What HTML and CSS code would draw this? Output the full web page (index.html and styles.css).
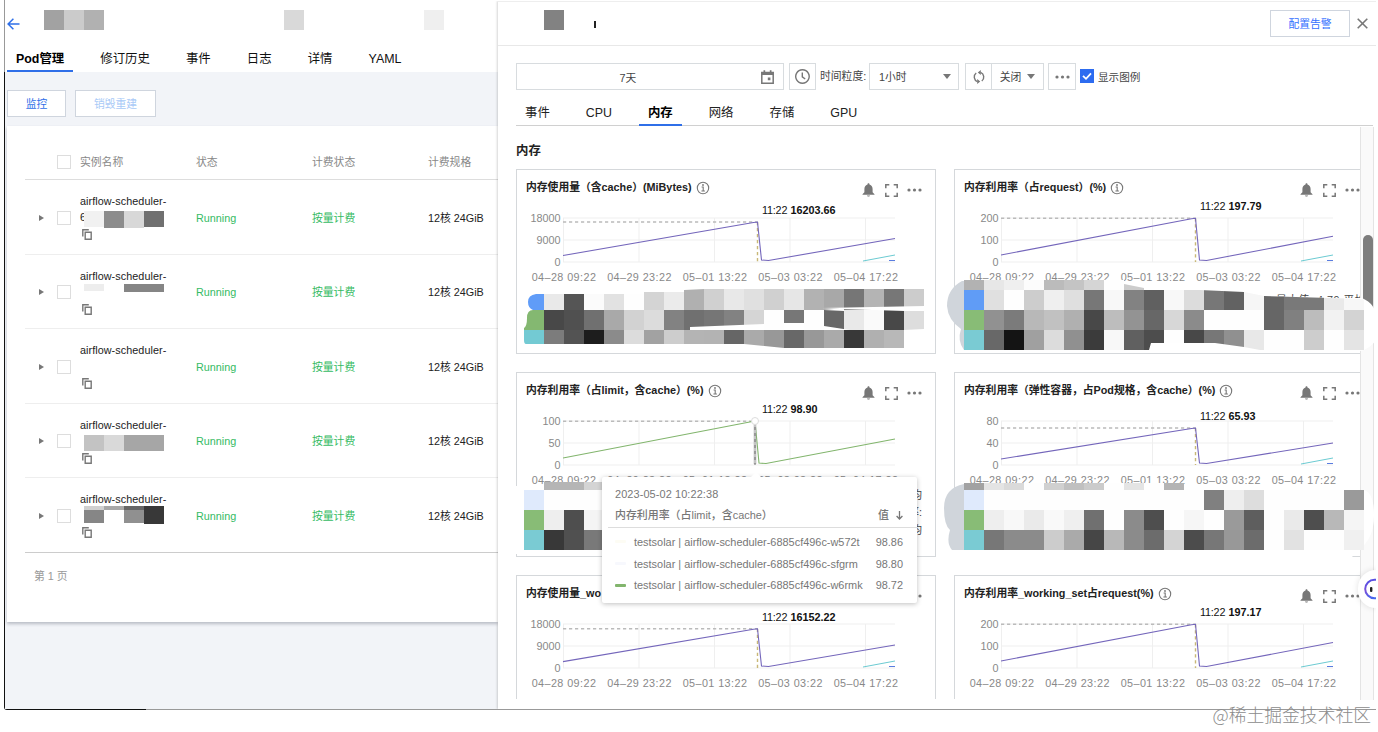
FILE: index.html
```html
<!DOCTYPE html>
<html lang="zh-CN">

<head>
    <meta charset="UTF-8">
    <title>Pod管理</title>
    <link rel="stylesheet" href="styles.css">
</head>

<body>
    <!-- 图标 -->
    <svg class="defs">
        <symbol id="i-copy" viewBox="0 0 10 11">
            <path d="M0.8 7.5V0.8H6.8M3.2 3.2H9.2V10.2H3.2Z" fill="none" stroke="#777" stroke-width="1.4" />
        </symbol>
        <symbol id="i-info" viewBox="0 0 14 14">
            <circle cx="7" cy="7" r="5.7" fill="none" stroke="#777" stroke-width="1.1" />
            <path d="M5.6 6H7.2V9.8M5.4 10H8.9" fill="none" stroke="#777" stroke-width="1.1" />
            <circle cx="7" cy="4" r="0.9" fill="#777" />
        </symbol>
        <symbol id="i-bell" viewBox="0 0 13 14">
            <path d="M6.5 0.3C7.2 0.3 7.5 0.8 7.5 1.4C9.6 2 10.6 3.7 10.6 6V9.2L12.5 11.2V11.8H0.5V11.2L2.4 9.2V6C2.4 3.7 3.4 2 5.5 1.4C5.5 0.8 5.8 0.3 6.5 0.3ZM5 12.4H8C8 13.8 5 13.8 5 12.4Z" fill="#777" />
        </symbol>
        <symbol id="i-full" viewBox="0 0 13 13">
            <path d="M0.8 4.3V0.8H4.3M8.7 0.8H12.2V4.3M12.2 8.7V12.2H8.7M4.3 12.2H0.8V8.7" fill="none" stroke="#777" stroke-width="1.5" />
        </symbol>
        <symbol id="i-more" viewBox="0 0 15 4">
            <circle cx="2" cy="2" r="1.6" fill="#777" />
            <circle cx="7.5" cy="2" r="1.6" fill="#777" />
            <circle cx="13" cy="2" r="1.6" fill="#777" />
        </symbol>
    </svg>

    <div class="window">
        <div class="page">
            <div class="page-head">
                <svg class="back" viewBox="0 0 13 12">
                    <path d="M12.5 6H1.2M6.4 0.7L1.1 6L6.4 11.3" fill="none" stroke="#2f6fe8" stroke-width="1.5" />
                </svg>
                <div class="mask m1"><i></i><i></i><i></i></div>
                <div class="mask m2"><i></i></div>
                <div class="mask m3"><i></i></div>
            </div>
            <ul class="page-tabs">
                <li class="on">Pod管理</li>
                <li>修订历史</li>
                <li>事件</li>
                <li>日志</li>
                <li>详情</li>
                <li>YAML</li>
            </ul>
            <div class="actions">
                <button class="btn">监控</button>
                <button class="btn disabled">销毁重建</button>
            </div>
            <div class="panel">
                <div class="row head">
                    <span></span><span><i class="check"></i></span>
                    <span>实例名称</span><span>状态</span><span>计费状态</span><span>计费规格</span>
                </div>
                <div id="pods"></div>
                <div class="pager">第 1 页</div>
            </div>
        </div>

        <div class="drawer">
            <div class="drawer-head">
                <i class="title-mask"></i>
                <i class="tick"></i>
                <button class="btn alarm">配置告警</button>
                <svg class="close" viewBox="0 0 11 11">
                    <path d="M0.7 0.7L10.3 10.3M10.3 0.7L0.7 10.3" stroke="#777" stroke-width="1.6" />
                </svg>
            </div>
            <div class="toolbar">
                <div class="box date">
                    <span>7天</span>
                    <svg width="13" height="14" viewBox="0 0 13 14">
                        <path d="M0.8 2.6H12.2V13.2H0.8Z" fill="none" stroke="#777" stroke-width="1.5" />
                        <path d="M0.5 2H12.5V5H0.5ZM2.5 0.3H4.2V3H2.5ZM8.8 0.3H10.5V3H8.8ZM6.8 7.6H9.4V10.2H6.8Z" fill="#777" />
                    </svg>
                </div>
                <div class="box clock">
                    <svg width="15" height="15" viewBox="0 0 15 15">
                        <path d="M7.5 0.8A6.7 6.7 0 1 1 7.4 0.8ZM7.3 3.4V7.8L10.2 10" fill="none" stroke="#777" stroke-width="1.4" />
                    </svg>
                </div>
                <span class="label">时间粒度:</span>
                <div class="box grain">1小时<i class="caret"></i></div>
                <div class="box refresh">
                    <svg width="14" height="14" viewBox="0 0 14 14">
                        <path d="M8.6 2.4A5 5 0 0 1 9.8 11M5.4 11.6A5 5 0 0 1 4.2 3" fill="none" stroke="#777" stroke-width="1.4" />
                        <path d="M8.8 0L5.8 2.6L8.8 5ZM5.2 14L8.2 11.4L5.2 9Z" fill="#777" />
                    </svg>
                </div>
                <div class="box off">关闭<i class="caret"></i></div>
                <div class="box more"><svg width="15" height="4"><use href="#i-more" /></svg></div>
                <i class="checked"><svg width="14" height="14" viewBox="0 0 14 14">
                        <path d="M3 6.8L6 9.8L11 4.4" fill="none" stroke="#fff" stroke-width="1.8" />
                    </svg></i>
                <span class="legend-label">显示图例</span>
            </div>
            <ul class="tabs">
                <li>事件</li>
                <li>CPU</li>
                <li class="on">内存</li>
                <li>网络</li>
                <li>存储</li>
                <li>GPU</li>
            </ul>
            <div class="scroll">
                <div class="content">
                    <h3>内存</h3>
                    <div class="cards" id="cards"></div>
                </div>
                <div class="track"><div class="thumb"></div></div>
            </div>

            <svg class="mosaic" id="mosaic" width="880" height="708" viewBox="498 1 880 708"></svg>

            <div class="tip">
                <div class="tip-time">2023-05-02 10:22:38</div>
                <div class="tip-head"><span>内存利用率（占limit，含cache）</span><span>值
                        <svg width="7" height="9" viewBox="0 0 7 9"><path d="M3.5 0V8M0.6 5L3.5 8L6.4 5" fill="none" stroke="#777" stroke-width="1.3" /></svg></span>
                </div>
                <div class="tip-row"><i class="c1"></i><span>testsolar | airflow-scheduler-6885cf496c-w572t</span><b>98.86</b></div>
                <div class="tip-row"><i class="c2"></i><span>testsolar | airflow-scheduler-6885cf496c-sfgrm</span><b>98.80</b></div>
                <div class="tip-row"><i class="c3"></i><span>testsolar | airflow-scheduler-6885cf496c-w6rmk</span><b>98.72</b></div>
            </div>
            <div class="helper">
                <svg width="20" height="38" viewBox="0 0 20 38">
                    <defs>
                        <linearGradient id="ring" x1="0" y1="0" x2="0.4" y2="1">
                            <stop offset="0" stop-color="#4a4fe8" />
                            <stop offset="0.5" stop-color="#7a50d8" />
                            <stop offset="1" stop-color="#4668f0" />
                        </linearGradient>
                    </defs>
                    <circle cx="16.5" cy="19" r="9.3" fill="#fff" stroke="url(#ring)" stroke-width="2" />
                    <rect x="12" y="17" width="2.4" height="5" rx="1" fill="#222" />
                </svg>
            </div>
        </div>
    </div>
    <div class="watermark">@稀土掘金技术社区</div>
    <script src="script.js"></script>
</body>

</html>
```
FILE: styles.css
```css
body,
h3,
ul,
button {
    margin: 0;
    padding: 0;
}

body {
    position: relative;
    width: 1378px;
    height: 732px;
    overflow: hidden;
    background: #fff;
    font: 10.8px/16px "Liberation Sans", "Noto Sans CJK SC", sans-serif;
    color: #222;
}

ul {
    list-style: none;
}

button {
    font: inherit;
}

* {
    box-sizing: border-box;
}

svg {
    display: block;
    flex: none;
}

.defs {
    position: absolute;
    width: 0;
    height: 0;
}

.window {
    display: flex;
    width: 1372px;
    height: 710px;
    margin-left: 4px;
    padding: 1px 0 1px 1px;
    border-bottom-left-radius: 3px;
    background:
        linear-gradient(#111, #111) 0 100% / 142px 1px no-repeat,
        linear-gradient(#999, #999) 0 100% / 100% 1px no-repeat,
        linear-gradient(#999 72px, #111 72px) 0 0 / 1px 100% no-repeat;
}

/* 左侧页面 */
.page {
    width: 493px;
    height: 708px;
    flex: none;
    background: #f2f4f8;
    overflow: hidden;
}

.page-head {
    display: flex;
    height: 44px;
    padding: 9px 0 0 2px;
    background: #fff;
}

.back {
    width: 13px;
    height: 12px;
    margin-top: 8px;
}

.mask {
    display: flex;
    height: 20px;
}

.mask i {
    width: 20px;
    background: #a2a2a2;
}

.m1 {
    margin-left: 24px;
}

.m1 i:nth-child(2) {
    background: #cbcbcb;
}

.m1 i:nth-child(3) {
    background: #b1b1b1;
}

.m2 {
    margin-left: 180px;
}

.m2 i {
    background: #d9d9d9;
}

.m3 {
    margin-left: 120px;
}

.m3 i {
    background: #efefef;
}

.page-tabs {
    display: flex;
    gap: 18.1px;
    height: 27px;
    padding-left: 2px;
    background: #fff;
    font-size: 12.4px;
    line-height: 29px;
    color: #111;
}

.page-tabs li {
    height: 27px;
    padding: 0 9px;
}

.page-tabs .on {
    border-bottom: 2px solid #2f6fe8;
    font-weight: bold;
    color: #000;
}

.actions {
    display: flex;
    gap: 9px;
    padding: 18px 0 9px 2px;
}

.btn {
    width: 59px;
    height: 27px;
    border: 1px solid #cfd5de;
    background: #fff;
    color: #2f6fe8;
}

.btn.disabled {
    width: 81px;
    color: #a9caf7;
}

.panel {
    height: 496px;
    margin-left: 2px;
    padding: 17px 0 0 18px;
    background: #fff;
    box-shadow: 0 2px 3px rgba(54, 58, 80, .3);
}

.row {
    display: grid;
    grid-template-columns: 32px 23px 116px 116px 116px 1fr;
    align-items: center;
    height: 74.5px;
    padding-top: 2px;
    border-bottom: 1px solid #eee;
}

.row.head {
    height: 37px;
    border-bottom-color: #ddd;
    color: #888;
}

.row.pod:last-child {
    border-bottom-color: #ccc;
}

.check {
    display: block;
    width: 14px;
    height: 14px;
    border: 1px solid #ddd;
}

.arrow {
    width: 0;
    margin-left: 14px;
    border: 3px solid transparent;
    border-left: 5px solid #777;
    border-right: 0;
}

.name {
    padding-bottom: 1px;
}

.name p {
    margin: 0;
    height: 15px;
    line-height: 15px;
    letter-spacing: .06px;
}

.name .rest {
    display: flex;
    height: 17px;
    line-height: 17px;
}

.name .rest span {
    width: 0;
}

.name .copy {
    width: 10px;
    height: 11px;
    margin: 3px 0 0 2px;
}

.name .rest svg {
    overflow: visible;
}

.green {
    color: #35bb63;
}

.pager {
    padding: 15px 0 0 9px;
    color: #999;
}

/* 监控抽屉 */
.drawer {
    position: relative;
    width: 878px;
    height: 708px;
    flex: none;
    background: #fff;
    border-top: 1px solid #eee;
    box-shadow: -1px 0 2px rgba(0, 0, 0, .16);
    clip-path: inset(0 0 0 -4px);
}

.drawer-head {
    display: flex;
    height: 44px;
    padding: 8px 8px 0 46px;
    border-bottom: 1px solid #e8e8e8;
}

.title-mask {
    width: 20px;
    height: 20px;
    background: #828282;
}

.tick {
    width: 2px;
    height: 7px;
    margin: 11px 0 0 30px;
    background: #222;
}

.btn.alarm {
    width: 80px;
    margin-left: auto;
    color: #3370ff;
}

.close {
    width: 11px;
    height: 11px;
    margin: 8px 0 0 7px;
}

.toolbar {
    display: flex;
    height: 52px;
    padding: 17px 0 0 18px;
    color: #444;
}

.box {
    display: flex;
    align-items: center;
    justify-content: center;
    height: 27px;
    border: 1px solid #d8dcdf;
}

.date {
    width: 268px;
    padding-right: 9px;
}

.date span {
    flex: 1;
    padding: 2px 22px 0 0;
    text-align: center;
}

.clock {
    width: 27px;
    margin-left: 5px;
}

.label {
    width: 49px;
    margin: 5px 0 0 4px;
    white-space: nowrap;
}

.grain {
    justify-content: space-between;
    width: 90px;
    padding: 0 7px 0 9px;
}

.caret {
    border: 4px solid transparent;
    border-top: 5px solid #777;
    border-bottom: 0;
}

.refresh {
    width: 27px;
    margin-left: 6px;
}

.off {
    gap: 6px;
    width: 52px;
    border-left: 0;
}

.more {
    width: 28px;
    margin-left: 4px;
}

.checked {
    width: 14px;
    height: 14px;
    margin: 6px 0 0 4px;
    background: #2d6cf0;
}

.legend-label {
    margin: 6px 0 0 4px;
    font-size: 10.6px;
}

.tabs {
    display: flex;
    gap: 18px;
    height: 28px;
    margin: 0 3px 0 18px;
    border-bottom: 1px solid #d0d0d0;
    font-size: 12.4px;
    line-height: 31px;
    color: #222;
}

.tabs li {
    height: 28px;
    padding: 0 9px;
}

.tabs .on {
    border-bottom: 2px solid #2f6fe8;
    font-weight: bold;
    color: #000;
}

.scroll {
    display: flex;
    height: 573px;
    padding-top: 1px;
}

.content {
    width: 862px;
    padding: 15px 0 0 18px;
    overflow: hidden;
}

.content h3 {
    height: 27px;
    font-size: 12.4px;
    line-height: 18px;
}

.cards {
    display: grid;
    grid-template-columns: 420px 421px;
    grid-auto-rows: 184.8px;
    gap: 18px;
}

.card {
    padding: 9px 13px 0 9px;
    border: 1px solid #d5d8db;
}

.card:nth-child(even) {
    padding-right: 14px;
}

.card-head {
    display: flex;
    height: 18px;
    font-weight: bold;
    line-height: 17px;
    color: #222;
    white-space: nowrap;
}

.card-head .info {
    width: 14px;
    height: 14px;
    margin: 2px 0 0 4px;
}

.card-head .bell {
    width: 13px;
    height: 14px;
    margin: 4px 0 0 auto;
}

.card-head .full {
    width: 13px;
    height: 13px;
    margin: 5px 0 0 10px;
}

.card-head .dots {
    width: 15px;
    height: 4px;
    margin: 9px 0 0 9px;
}

.chart {
    margin: -28px 0 0 -10px;
    overflow: visible;
}

.chart text {
    font-size: 10.8px;
    fill: #888;
}

.chart .date-label {
    letter-spacing: .42px;
}

.chart .mark {
    fill: #111;
    letter-spacing: -.2px;
}

.chart .strong {
    font-weight: bold;
    letter-spacing: 0;
}

.chart .grid {
    stroke: #efefef;
}

.chart .dash {
    stroke: #bbb;
    stroke-width: 1.4;
    stroke-dasharray: 3.2 2.8;
}

.rest-legend {
    margin: -1px 0 0;
    text-align: right;
    line-height: 17.5px;
    color: #444;
}

.rest-legend.single {
    margin: 7px -6px 0 0;
    letter-spacing: .5px;
}

.track {
    width: 14px;
    height: 573px;
    padding: 108px 0 0 2px;
    border: 1px solid #e4e4e4;
    border-width: 0 1px;
    background: #fafafa;
}

.thumb {
    width: 10px;
    height: 78px;
    border-radius: 5px;
    background: #7d7d7d;
}

.mosaic {
    position: absolute;
    left: 0;
    top: -1px;
}

/* 图表提示框 */
.tip {
    position: absolute;
    left: 104px;
    top: 475px;
    width: 315px;
    height: 126px;
    padding: 9px 0 0;
    border-radius: 2px;
    background: #fff;
    box-shadow: 0 1px 5px rgba(0, 0, 0, .25);
    font-size: 10.93px;
    color: #777;
}

.tip::before {
    content: "";
    position: absolute;
    left: 148px;
    top: -5px;
    border: 6px solid transparent;
    border-top: 0;
    border-bottom-color: #fff;
}

.tip-time {
    padding-left: 13px;
    letter-spacing: .1px;
}

.tip-head {
    display: flex;
    justify-content: space-between;
    height: 26px;
    margin: 0 0 3px 6px;
    padding: 5px 14px 0 7px;
    border-bottom: 1px solid #ddd;
    font-weight: 500;
}

.tip-head span:last-child {
    display: flex;
    align-items: center;
    gap: 7px;
    height: 16px;
}

.tip-row {
    display: flex;
    align-items: center;
    height: 21.8px;
    padding: 0 14px 0 13px;
    white-space: nowrap;
}

.tip-row i {
    width: 11px;
    height: 3px;
    margin-right: 8px;
    border-radius: 1px;
}

.tip-row b {
    margin-left: auto;
    font-weight: normal;
}

.c1 {
    background: #fdfcf4;
}

.c2 {
    background: #f7f8fd;
}

.c3 {
    background: #82b56d;
}

.helper {
    position: absolute;
    right: 0;
    top: 568px;
    width: 18px;
    height: 38px;
    border-radius: 19px 0 0 19px;
    background: #fff;
    box-shadow: 0 0 6px rgba(0, 0, 0, .12);
    overflow: hidden;
}

.watermark {
    position: absolute;
    right: 7px;
    top: 701px;
    font: 300 17.8px/26px "Noto Sans CJK SC", sans-serif;
    color: #8c8c8c;
    white-space: nowrap;
}
```
FILE: script.js
```js
// Pod 列表，cells: [x, y, w, h, 颜色]
var pods = [
    { text: "6", cells: [[4, 2, 20, 16, "#f1f1f1"], [24, 2, 20, 17, "#8c8c8c"], [44, 2, 20, 17, "#d8d8d8"], [64, 2, 20, 16, "#707070"]] },
    { text: "", cells: [[4, 0, 20, 7, "#ededed"], [44, 0, 40, 8, "#858585"]] },
    { text: "", cells: [] },
    { text: "", cells: [[4, 2, 20, 16, "#c3c3c3"], [24, 2, 20, 16, "#d9d9d9"], [44, 2, 40, 16, "#a6a6a6"]] },
    { text: "", cells: [[4, -1, 20, 4, "#d0d0d0"], [24, -1, 20, 4, "#a8a8a8"], [44, -1, 20, 4, "#666"], [4, 3, 20, 13, "#868686"], [44, 3, 20, 13, "#909090"], [64, -1, 20, 18, "#383838"]] }
];

function rects(cells) {
    var html = "";
    for (var i = 0; i < cells.length; i++) {
        var c = cells[i];
        html += '<rect x="' + c[0] + '" y="' + c[1] + '" width="' + c[2] + '" height="' + c[3] + '" fill="' + c[4] + '"/>';
    }
    return html;
}

var podHtml = "";
for (var i = 0; i < pods.length; i++) {
    podHtml += '<div class="row pod"><i class="arrow"></i><i class="check"></i>' +
        '<div class="name"><p>airflow-scheduler-</p><div class="rest">' + (pods[i].text ? '<span>' + pods[i].text + '</span>' : '') +
        '<svg width="84" height="17">' + rects(pods[i].cells) + '</svg></div>' +
        '<svg class="copy"><use href="#i-copy"/></svg></div>' +
        '<span class="green">Running</span><span class="green">按量计费</span><span>12核 24GiB</span></div>';
}
document.getElementById("pods").innerHTML = podHtml;

// 图表卡片，纵坐标相对卡片顶部
var charts = [
    { title: "内存使用量（含cache）(MiBytes)", y: ["18000", "9000", "0"], start: 86.5, peak: 53, end: 69.5, mark: "16203.66", markY: 45 },
    { title: "内存利用率（占request）(%)", y: ["200", "100", "0"], start: 86, peak: 49.3, end: 67.3, mark: "197.79", markY: 41, legend: ["最大值: 4.79 平均"] },
    { title: "内存利用率（占limit，含cache）(%)", y: ["100", "50", "0"], start: 86, peak: 49.3, end: 67, mark: "98.90", markY: 41, hover: true, legend: ["平均", "率:", "平均"] },
    { title: "内存利用率（弹性容器，占Pod规格，含cache）(%)", y: ["80", "40", "0"], start: 87, peak: 56, end: 71, mark: "65.93", markY: 48 },
    { title: "内存使用量_wo", y: ["18000", "9000", "0"], start: 86.6, peak: 53.8, end: 70, mark: "16152.22", markY: 45.5 },
    { title: "内存利用率_working_set占request(%)", y: ["200", "100", "0"], start: 86, peak: 49.3, end: 67.5, mark: "197.17", markY: 41 }
];
var dates = ["04–28 09:22", "04–29 23:22", "05–01 13:22", "05–03 03:22", "05–04 17:22"];

function drawChart(c) {
    var left = 47, right = 379, top = 49, bottom = 93;
    var px = c.hover ? 239 : 241.5;
    var s = '<svg class="chart" width="420" height="116">';
    for (var i = 0; i < 3; i++) {
        var y = top + i * 22;
        s += '<path class="grid" d="M' + left + ' ' + y + 'H' + right + '"/>';
        s += '<text x="44.5" y="' + (y + 4) + '" text-anchor="end">' + c.y[i] + '</text>';
    }
    for (i = 0; i < 5; i++) {
        var x = left + 0.5 + i * 75.5;
        s += '<path class="grid" d="M' + x + ' ' + top + 'V' + bottom + '"/>';
        s += '<text class="date-label" x="' + (x + 0.5) + '" y="111.5" text-anchor="middle">' + dates[i] + '</text>';
    }
    s += '<path class="dash" d="M' + left + ' ' + c.peak + 'H' + px + '"/>';
    s += '<path class="dash" style="stroke:' + (c.hover ? "#999" : "#c9b877") + '" d="M' + px + ' ' + c.peak + 'V' + bottom + '"/>';
    s += '<path d="M' + left + ' ' + c.start + 'L' + (px - 4) + ' ' + (c.peak + 0.5) + 'L' + px + ' ' + c.peak +
        'L' + (px + 4) + ' 91L' + (px + 11) + ' 91.5L' + right + ' ' + c.end + '" fill="none" stroke="' + (c.hover ? "#82b56d" : "#7466bb") + '" stroke-width="1.1"/>';
    if (c.hover) {
        s += '<path d="M' + px + ' 52V92" stroke="#999" stroke-width="2.4"/>';
        s += '<path d="M' + px + ' 52V92" stroke="#eee" stroke-width="1" stroke-dasharray="3 3"/>';
        s += '<circle cx="' + px + '" cy="49" r="3.5" fill="#fff" stroke="#ddd"/>';
    } else {
        s += '<path d="M347 92L379 86" stroke="#6ccbd2"/><path d="M373 91.5H379" stroke="#5a7de0"/>';
    }
    s += '<text class="mark" x="246" y="' + c.markY + '">11:22</text>';
    s += '<text class="mark strong" x="274.5" y="' + c.markY + '">' + c.mark + '</text>';
    return s + '</svg>';
}

var cardHtml = "";
for (i = 0; i < charts.length; i++) {
    cardHtml += '<div class="card"><div class="card-head">' + charts[i].title +
        '<svg class="info"><use href="#i-info"/></svg><svg class="bell"><use href="#i-bell"/></svg>' +
        '<svg class="full"><use href="#i-full"/></svg><svg class="dots"><use href="#i-more"/></svg></div>' + drawChart(charts[i]);
    if (charts[i].legend) {
        cardHtml += '<div class="rest-legend' + (charts[i].legend.length == 1 ? ' single' : '') + '">' + charts[i].legend.join("<br>") + '</div>';
    }
    cardHtml += '</div>';
}
document.getElementById("cards").innerHTML = cardHtml;

// 打码区域，每格 20px，一格两位灰度，-- 为空
function line(x, y, h, codes) {
    var cells = [];
    codes = codes.split(" ");
    for (var i = 0; i < codes.length; i++) {
        if (codes[i] == "--") continue;
        var g = codes[i];
        cells.push([x + i * 20, y, 20, h, g.charAt(0) == "#" ? g : "#" + g + g + g]);
    }
    return rects(cells);
}

var m = "";
// 卡片1
m += '<clipPath id="k1"><path d="M544 294H644V292H684V290L705 289H925V306L822 308L840 309L905 311H924V329L904 330V348H784L744 344H526Q524 344 524 340V328Q527 326 527 318Q527 310 533 310Q528 308 528 302Q528 295 536 294Z"/></clipPath>';
m += '<g clip-path="url(#k1)">' +
    line(524, 288, 22, "#609cf8 e9 55 fb e2 fe d4 eb b0 d0 e8 e0 d0 e6 b2 a8 76 b4 77 cc") +
    line(524, 310, 20, "#84b871 48 50 70 a9 d2 dc 82 70 76 82 d5 fe 77 fe 68 e9 fa 48 dd") +
    line(524, 330, 20, "#73cad3 7c 53 1d 8b dc a2 cd b4 b3 66 aa 98 68 98 aa 38 b0 b8") +
    '<path d="M690 327L764 324V330H690ZM784 323H804V330H784ZM824 310L844 308V311ZM824 326L850 330H824Z" fill="#fff"/></g>';
// 卡片2
m += '<path d="M962 281Q947 289 947 306Q948 320 961 329Q957 341 964 350H975V281Z" fill="#d0d5db"/>';
m += '<path d="M1144 290H1245L1262 296L1340 298L1362 298Q1376 304 1376 318V340Q1370 349 1360 351H1146V343Z" fill="#fff"/>';
m += line(964, 280, 10, "b2 e7 ef fc bb c4 d5 fe") + '<path d="M1124 284L1144 288V290H1124Z" fill="#ccc"/>';
m += '<clipPath id="k2"><path d="M964 290H1200L1244 292L1264 296L1364 299V350H1260L1244 347L1215 343H1151L1149 350H964Z"/></clipPath>';
m += '<g clip-path="url(#k2)">' +
    line(964, 290, 20, "#609cf6 e0 fe cd ef df 77 f8 82 60 f8 dc 77 62 f6 66 79 79 e9 f7") +
    line(964, 310, 20, "#88bc76 91 7b b8 c1 b0 48 bd 93 67 d7 8b fe fe fe 66 80 bc f2 d3") +
    line(964, 330, 20, "#7acbd3 68 14 a0 dc 90 3b f8 60 4d fe 48 77 90 e8 fe fe cd fe e4") + '</g>';
// 卡片3
m += '<rect x="514" y="486" width="90" height="68" fill="#fff"/>';
m += line(544, 482, 8, "b5 b5 d4") + line(524, 490, 20, "#dfeafc fe fe fe") +
    line(524, 510, 20, "#88bc76 ee 4e f4") + line(524, 530, 20, "#7acbd3 38 50 79");
// 卡片4
m += '<path d="M964 484Q944 488 944 508Q944 525 950 530Q946 543 952 550H975V484Z" fill="#d0d5db"/>';
m += '<path d="M964 490H1364Q1374 493 1374 515Q1374 540 1358 550L1352 557H952V550H964Z" fill="#fff"/>';
m += line(964, 483, 7, "a2 e4 da fe d0 c0 cb fe e4 fe b4") +
    line(964, 490, 20, "#dfeafc fe fe fe fe fe fe fe fe fe fe fe 80 ee dd fe fe fe fe 9a") +
    line(964, 510, 20, "#88bc76 ee f8 ea f9 ef 70 fe 8b 4e fe f6 fe 9a 5e fe ea 4e b8 f5") +
    line(964, 530, 20, "#7acbd3 77 8b 8b cc aa 46 b8 8b 6c d4 4c 77 98 6c fe e2 fe fe f0");
document.getElementById("mosaic").innerHTML = m;
```
